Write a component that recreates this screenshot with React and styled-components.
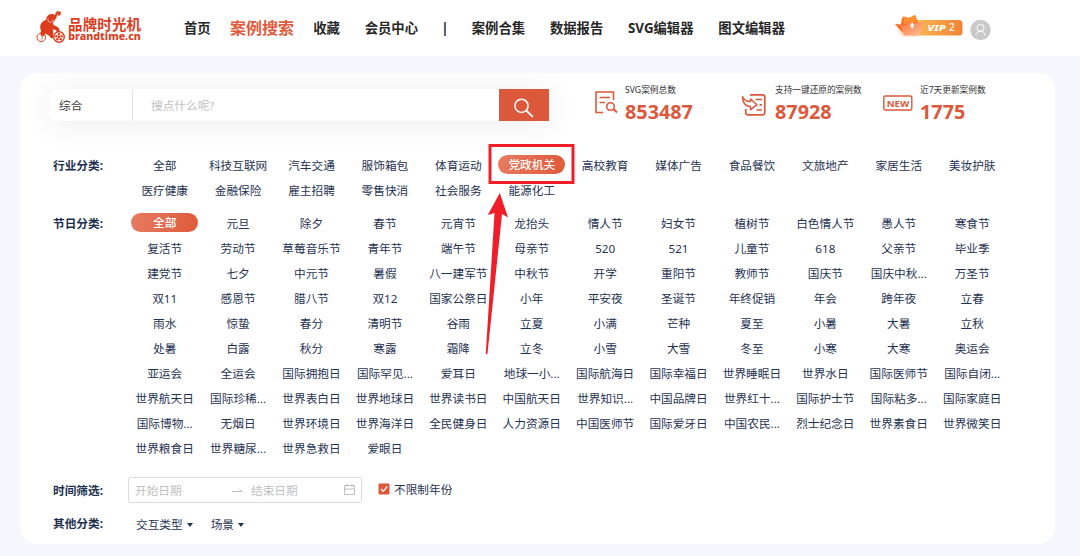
import styled, { createGlobalStyle, css } from "styled-components";

const GlobalStyle = createGlobalStyle`
  * {
    box-sizing: border-box;
  }

  body {
    margin: 0;
    height: 556px;
    overflow: hidden;
    background: #f6f7fe;
    color: #1f3353;
    font-family: "Noto Sans", "Noto Sans CJK SC", sans-serif;
    font-size: 11.67px;
  }
`;

const Page = styled.div`
  position: relative;
  height: 556px;
`;

const Header = styled.header`
  display: flex;
  align-items: center;
  height: 56px;
  padding-left: 34px;
  background: #fff;
`;

const Nav = styled.nav`
  display: flex;
  align-items: center;
  gap: 24.8px;
  width: 709px;
  margin-left: 40px;
`;

const NavItem = styled.a`
  color: #262626;
  font-size: 13.33px;
  font-weight: 700;
  line-height: 24px;
  white-space: nowrap;

  ${(props) =>
    props.$active &&
    css`
      margin: 0 -5.5px;
      color: #e05a3c;
      font-size: 16px;
    `}

  ${(props) =>
    props.$divider &&
    css`
      margin: 0 -1.6px;
    `}
`;

const Avatar = styled.svg`
  margin: 3px 0 0 5px;
`;

const Card = styled.main`
  width: 1035px;
  height: 471px;
  margin: 17px 0 0 20px;
  padding: 16px 0 0 29px;
  overflow: hidden;
  border-radius: 17px;
  background: #fff;
`;

const TopRow = styled.div`
  display: flex;
  height: 64px;
`;

const SearchBox = styled.div`
  display: flex;
  width: 500px;
  height: 32px;
  border-radius: 8px 0 0 8px;
  background: #fff;
  box-shadow: 0 3px 32px rgba(0, 0, 0, 0.075);
`;

const SearchType = styled.div`
  width: 84px;
  padding-left: 10px;
  border-right: 1px solid #e2e2e2;
  color: #404040;
  line-height: 33px;
`;

const SearchInput = styled.input`
  flex: 1;
  min-width: 0;
  padding: 1px 0 0 18px;
  border: none;
  outline: none;
  background: transparent;
  font: inherit;

  &::placeholder {
    color: #bfbfbf;
  }
`;

const SearchButton = styled.button`
  width: 50px;
  padding: 8px 0 0;
  border: none;
  background: #dc583b;
  cursor: pointer;
`;

const Stats = styled.div`
  display: flex;
  margin-left: 45px;
`;

const Stat = styled.div`
  display: flex;
  width: ${(props) => props.$width}px;
`;

const StatIcon = styled.svg`
  flex: none;
  margin-right: ${(props) => props.$gap}px;
`;

const StatLabel = styled.div`
  margin-top: -6px;
  color: #333;
  font-size: 8.67px;
  line-height: 14px;
  white-space: nowrap;
`;

const StatValue = styled.div`
  color: #dc583b;
  font-size: 19.8px;
  font-weight: 700;
  line-height: 30px;
`;

const FilterRow = styled.section`
  display: flex;
  margin-bottom: 8px;
`;

const FilterLabel = styled.div`
  width: 79px;
  padding-left: 4px;
  color: #1c2f4e;
  font-weight: 700;
  line-height: 25px;
`;

const TagGrid = styled.div`
  display: grid;
  grid-template-columns: repeat(12, 73.42px);
  grid-auto-rows: 25px;
  justify-items: center;
  align-items: center;
`;

const Tag = styled.span`
  width: 67px;
  height: 19px;
  border-radius: 10px;
  line-height: 19px;
  text-align: center;
  white-space: nowrap;
  cursor: pointer;

  ${(props) =>
    props.$active &&
    css`
      margin-top: -2px;
      background: linear-gradient(100deg, #e77b62, #df5a3a);
      color: #fff;
      font-weight: 500;
      line-height: 20px;
    `}
`;

const TimeRow = styled.section`
  display: flex;
  align-items: center;
  height: 26px;
  margin-top: 16px;
`;

const DateRange = styled.div`
  display: flex;
  align-items: center;
  width: 234px;
  height: 26px;
  padding: 0 6px 1px;
  border: 1px solid #dcdcdc;
  border-radius: 2px;
  color: #bfbfbf;
`;

const DateField = styled.span`
  width: ${(props) => props.$width}px;
`;

const RangeArrow = styled.svg`
  margin-right: 8px;
`;

const CheckLabel = styled.label`
  display: flex;
  align-items: center;
  gap: 4px;
  margin: -3px 0 0 16px;
`;

const OtherRow = styled.section`
  display: flex;
  align-items: center;
  margin-top: 8px;
`;

const Dropdown = styled.span`
  display: flex;
  align-items: center;
  gap: 4px;
  margin: 0 10px 0 8px;
`;

const Caret = styled.i`
  margin-top: 3px;
  border: 3.5px solid transparent;
  border-top: 4px solid #1f3353;
  border-bottom: none;
`;

const Annotation = styled.svg`
  position: absolute;
  top: 140px;
  left: 480px;
  pointer-events: none;
`;

const navItems = [
  "首页",
  "案例搜索",
  "收藏",
  "会员中心",
  "|",
  "案例合集",
  "数据报告",
  "SVG编辑器",
  "图文编辑器",
];

const industries = [
  "全部", "科技互联网", "汽车交通", "服饰箱包", "体育运动", "党政机关",
  "高校教育", "媒体广告", "食品餐饮", "文旅地产", "家居生活", "美妆护肤",
  "医疗健康", "金融保险", "雇主招聘", "零售快消", "社会服务", "能源化工",
];

const festivals = [
  "全部", "元旦", "除夕", "春节", "元宵节", "龙抬头",
  "情人节", "妇女节", "植树节", "白色情人节", "愚人节", "寒食节",
  "复活节", "劳动节", "草莓音乐节", "青年节", "端午节", "母亲节",
  "520", "521", "儿童节", "618", "父亲节", "毕业季",
  "建党节", "七夕", "中元节", "暑假", "八一建军节", "中秋节",
  "开学", "重阳节", "教师节", "国庆节", "国庆中秋...", "万圣节",
  "双11", "感恩节", "腊八节", "双12", "国家公祭日", "小年",
  "平安夜", "圣诞节", "年终促销", "年会", "跨年夜", "立春",
  "雨水", "惊蛰", "春分", "清明节", "谷雨", "立夏",
  "小满", "芒种", "夏至", "小暑", "大暑", "立秋",
  "处暑", "白露", "秋分", "寒露", "霜降", "立冬",
  "小雪", "大雪", "冬至", "小寒", "大寒", "奥运会",
  "亚运会", "全运会", "国际拥抱日", "国际罕见...", "爱耳日", "地球一小...",
  "国际航海日", "国际幸福日", "世界睡眠日", "世界水日", "国际医师节", "国际自闭...",
  "世界航天日", "国际珍稀...", "世界表白日", "世界地球日", "世界读书日", "中国航天日",
  "世界知识...", "中国品牌日", "世界红十...", "国际护士节", "国际粘多...", "国际家庭日",
  "国际博物...", "无烟日", "世界环境日", "世界海洋日", "全民健身日", "人力资源日",
  "中国医师节", "国际爱牙日", "中国农民...", "烈士纪念日", "世界素食日", "世界微笑日",
  "世界粮食日", "世界糖尿...", "世界急救日", "爱眼日",
];

function Logo() {
  return (
    <svg width="110" height="42" viewBox="34 5 110 42" fill="#dc3c1c">
      {/* trunk, body, legs */}
      <path d="M53 17c2.500-.5 3-2.500 3.200-4.500.3-1.700 1.500-2.500 2.700-2.300 1.500.3 1.500 2.200-.4 2.500" fill="none" stroke="#dc3c1c" strokeWidth="2" strokeLinecap="round" />
      <path d="M46.500 15.500c.8-2.600 4-4.300 7-3.300 2.300.8 2.800 3.300 1.700 5.500-.6 1.300-1.500 2-2.500 2.500l1 3c2 .6 4 1.400 5.300 3.300.6 1 .8 2.500.4 3.800h-2.600l-.8-2.300-3.500-.7c1.300 2 1 3.800.3 5.300l1.300 3-2.800 1-2.700-3.400-5.600-2.700c-2.600-1.500-3.500-5.200-2.200-8.200 1-2.400 3-3.700 5.200-4.200z" />
      <path d="M41.500 28c-1 1.800-1.300 3.500-.8 5.600l3.300.7 1.500-4z" />
      <path d="M48 16.500c-.6 2 .5 3.800 2.200 3.800 1.700.1 3-1.300 3.200-3" fill="none" stroke="#fff" strokeWidth=".6" />
      <circle cx="41.300" cy="35.300" r="4.300" fill="none" stroke="#dc3c1c" />
      <path d="M41.500 33.700l1 1.800-1.200 2" fill="none" stroke="#dc3c1c" strokeWidth=".9" />
      <circle cx="59" cy="35" r="5.300" fill="#fff" stroke="#dc3c1c" strokeWidth="1.400" />
      <g>
        <circle cx="59" cy="35" r="1.200" />
        <circle cx="59" cy="32.200" r="1.200" />
        <circle cx="61.700" cy="34.200" r="1.200" />
        <circle cx="60.700" cy="37.300" r="1.200" />
        <circle cx="57.300" cy="37.300" r="1.200" />
        <circle cx="56.300" cy="34.200" r="1.200" />
      </g>
      <text x="68" y="27.500" fontSize="14.500" fontWeight="700" textLength="73">品牌时光机</text>
      <text x="68.300" y="37.800" fontSize="11" fontWeight="800" textLength="72.500" lengthAdjust="spacingAndGlyphs">brandtime.cn</text>
    </svg>
  );
}

function VipBadge() {
  return (
    <svg width="71" height="32" viewBox="893 13 71 32">
      <defs>
        <linearGradient id="vipBar">
          <stop offset="0" stopColor="#f9bd54" />
          <stop offset="1" stopColor="#f28336" />
        </linearGradient>
        <linearGradient id="vipFox" x1="0" y1="0" x2="1" y2="1">
          <stop offset="0" stopColor="#ff7038" />
          <stop offset="1" stopColor="#ffc39a" />
        </linearGradient>
        <filter id="vipGlow" x="-30%" y="-30%" width="160%" height="160%">
          <feGaussianBlur stdDeviation="1.500" />
        </filter>
      </defs>
      <path d="M896 25h25l-5 12h-15z" fill="#ffb18b" opacity=".5" filter="url(#vipGlow)" />
      <path d="M912 21h47a3.500 3.500 0 0 1 3.500 3.500v8.500a3.500 3.500 0 0 1-3.500 3.500h-47z" fill="url(#vipBar)" />
      <path d="M895 25l6 .5 1-7 6 1 7-3.500 3 7-4 10-12 0z" fill="#f96b25" />
      <path d="M903 17l6 2 6-3 2 7-13 2z" fill="#ff902c" />
      <path d="M900.500 26l5 .5 4-4.500 5 2.500 9.500-1.500-4.500 12.500q-.4 1-1.500 1h-13q-1.200 0-1.500-1z" fill="url(#vipFox)" />
      <path d="M912.200 23.200l2.100 3.300-2.100 3.300-2.100-3.300z" fill="#fff" />
      <text x="927.500" y="32" fill="#fff" fontSize="9.500" fontWeight="800" fontStyle="italic" textLength="18" lengthAdjust="spacingAndGlyphs">VIP</text>
      <text x="949" y="32" fill="#fff" fontSize="10" fontWeight="500">2</text>
    </svg>
  );
}

function TagFilter({ label, items, active }) {
  return (
    <FilterRow>
      <FilterLabel>{label}</FilterLabel>
      <TagGrid>
        {items.map((item) => (
          <Tag key={item} $active={item === active}>
            {item}
          </Tag>
        ))}
      </TagGrid>
    </FilterRow>
  );
}

function App() {
  return (
    <Page>
      <GlobalStyle />
      <Header>
        <Logo />
        <Nav>
          {navItems.map((item) => (
            <NavItem key={item} $active={item === "案例搜索"} $divider={item === "|"}>
              {item}
            </NavItem>
          ))}
        </Nav>
        <VipBadge />
        <Avatar width="22" height="22" viewBox="0 0 22 22">
          <circle cx="11.500" cy="11" r="10.200" fill="#c9c9c9" />
          <g fill="none" stroke="#fff">
            <circle cx="11.500" cy="8.800" r="3.500" />
            <path d="M6.800 16.500c.3-2.700 2.200-4.400 4.700-4.400s4.400 1.700 4.700 4.400" />
          </g>
        </Avatar>
      </Header>
      <Card>
        <TopRow>
          <SearchBox>
            <SearchType>综合</SearchType>
            <SearchInput type="text" placeholder="搜点什么呢?" />
            <SearchButton>
              <svg width="22" height="22" viewBox="0 0 22 22" fill="none" stroke="#fff" strokeWidth="1.500">
                <circle cx="8.500" cy="8.800" r="6.600" />
                <path d="M13.200 13.500l6.600 6.300" strokeWidth="1.800" />
              </svg>
            </SearchButton>
          </SearchBox>
          <Stats>
            <Stat $width={147}>
              <StatIcon $gap={7} width="24" height="28" viewBox="0 0 24 28" fill="none" stroke="#dc583b" strokeWidth="1.600">
                <path d="M19.500 11V3H2v20.500h7M5.500 8.500h10.500M5.500 13.500h5.500" />
                <circle cx="16.500" cy="17.500" r="3.800" />
                <path d="M19.500 20l3.500 3.500" strokeWidth="2" />
              </StatIcon>
              <div>
                <StatLabel>SVG案例总数</StatLabel>
                <StatValue>853487</StatValue>
              </div>
            </Stat>
            <Stat $width={142}>
              <StatIcon $gap={8} width="26" height="30" viewBox="0 0 26 30" fill="none" stroke="#dc583b" strokeWidth="1.700">
                <path d="M9 5.800h12.500a2.300 2.300 0 0 1 2.300 2.300v15.400a2.300 2.300 0 0 1-2.300 2.300H7a2.300 2.300 0 0 1-2.300-2.300V20M14.500 10.500H21M18.500 15.800H21M15.500 21H21" />
                <path d="M1.500 7.500c1.300 3.500 3.500 5 8 5V10l6.500 5.700-6.500 5v-3.200C4.500 17.500 1.200 13.500 1.500 7.500z" strokeWidth="1.500" strokeLinejoin="round" />
              </StatIcon>
              <div>
                <StatLabel>支持一键还原的案例数</StatLabel>
                <StatValue>87928</StatValue>
              </div>
            </Stat>
            <Stat $width={110}>
              <StatIcon $gap={7} width="30" height="28" viewBox="0 0 30 28">
                <rect x=".8" y="7" width="28" height="14" rx="1.500" fill="none" stroke="#dc583b" strokeWidth="1.400" />
                <text x="3.700" y="17.500" fill="#dc583b" fontSize="9.500" fontWeight="700" textLength="22.500" lengthAdjust="spacingAndGlyphs">NEW</text>
              </StatIcon>
              <div>
                <StatLabel>近7天更新案例数</StatLabel>
                <StatValue>1775</StatValue>
              </div>
            </Stat>
          </Stats>
        </TopRow>
        <TagFilter label="行业分类:" items={industries} active="党政机关" />
        <TagFilter label="节日分类:" items={festivals} active="全部" />
        <TimeRow>
          <FilterLabel>时间筛选:</FilterLabel>
          <DateRange>
            <DateField $width={97}>开始日期</DateField>
            <RangeArrow width="11" height="9" viewBox="0 0 11 9" fill="none" stroke="#bfbfbf">
              <path d="M0 6.500h10L7 3.500" />
            </RangeArrow>
            <DateField $width={93}>结束日期</DateField>
            <svg width="11" height="11" viewBox="0 0 11 11" fill="none" stroke="#bfbfbf">
              <path d="M.5 1.500h10v9H.5zM.5 5h10M3 0v3M8 0v3" />
            </svg>
          </DateRange>
          <CheckLabel>
            <svg width="12" height="12" viewBox="0 0 12 12">
              <rect x=".5" y=".5" width="11" height="11" rx="1" fill="#dc583b" />
              <path d="M3 6l2.200 2.300L9.200 3.500" fill="none" stroke="#fff" strokeWidth="1.200" />
            </svg>
            不限制年份
          </CheckLabel>
        </TimeRow>
        <OtherRow>
          <FilterLabel>其他分类:</FilterLabel>
          <Dropdown>
            交互类型
            <Caret />
          </Dropdown>
          <Dropdown>
            场景
            <Caret />
          </Dropdown>
        </OtherRow>
      </Card>
      {/* red frame and arrow pointing at the selected industry */}
      <Annotation width="100" height="220" viewBox="480 140 100 220">
        <rect x="490" y="145.500" width="83" height="37" fill="none" stroke="#f01e28" strokeWidth="3" />
        <path d="M499.800 193L508 217.500l-6-3.500-14.500 139.500q-1 1.500-1.700 0L494.500 213l-6.700 2z" fill="#f01e28" />
      </Annotation>
    </Page>
  );
}

export default App;
